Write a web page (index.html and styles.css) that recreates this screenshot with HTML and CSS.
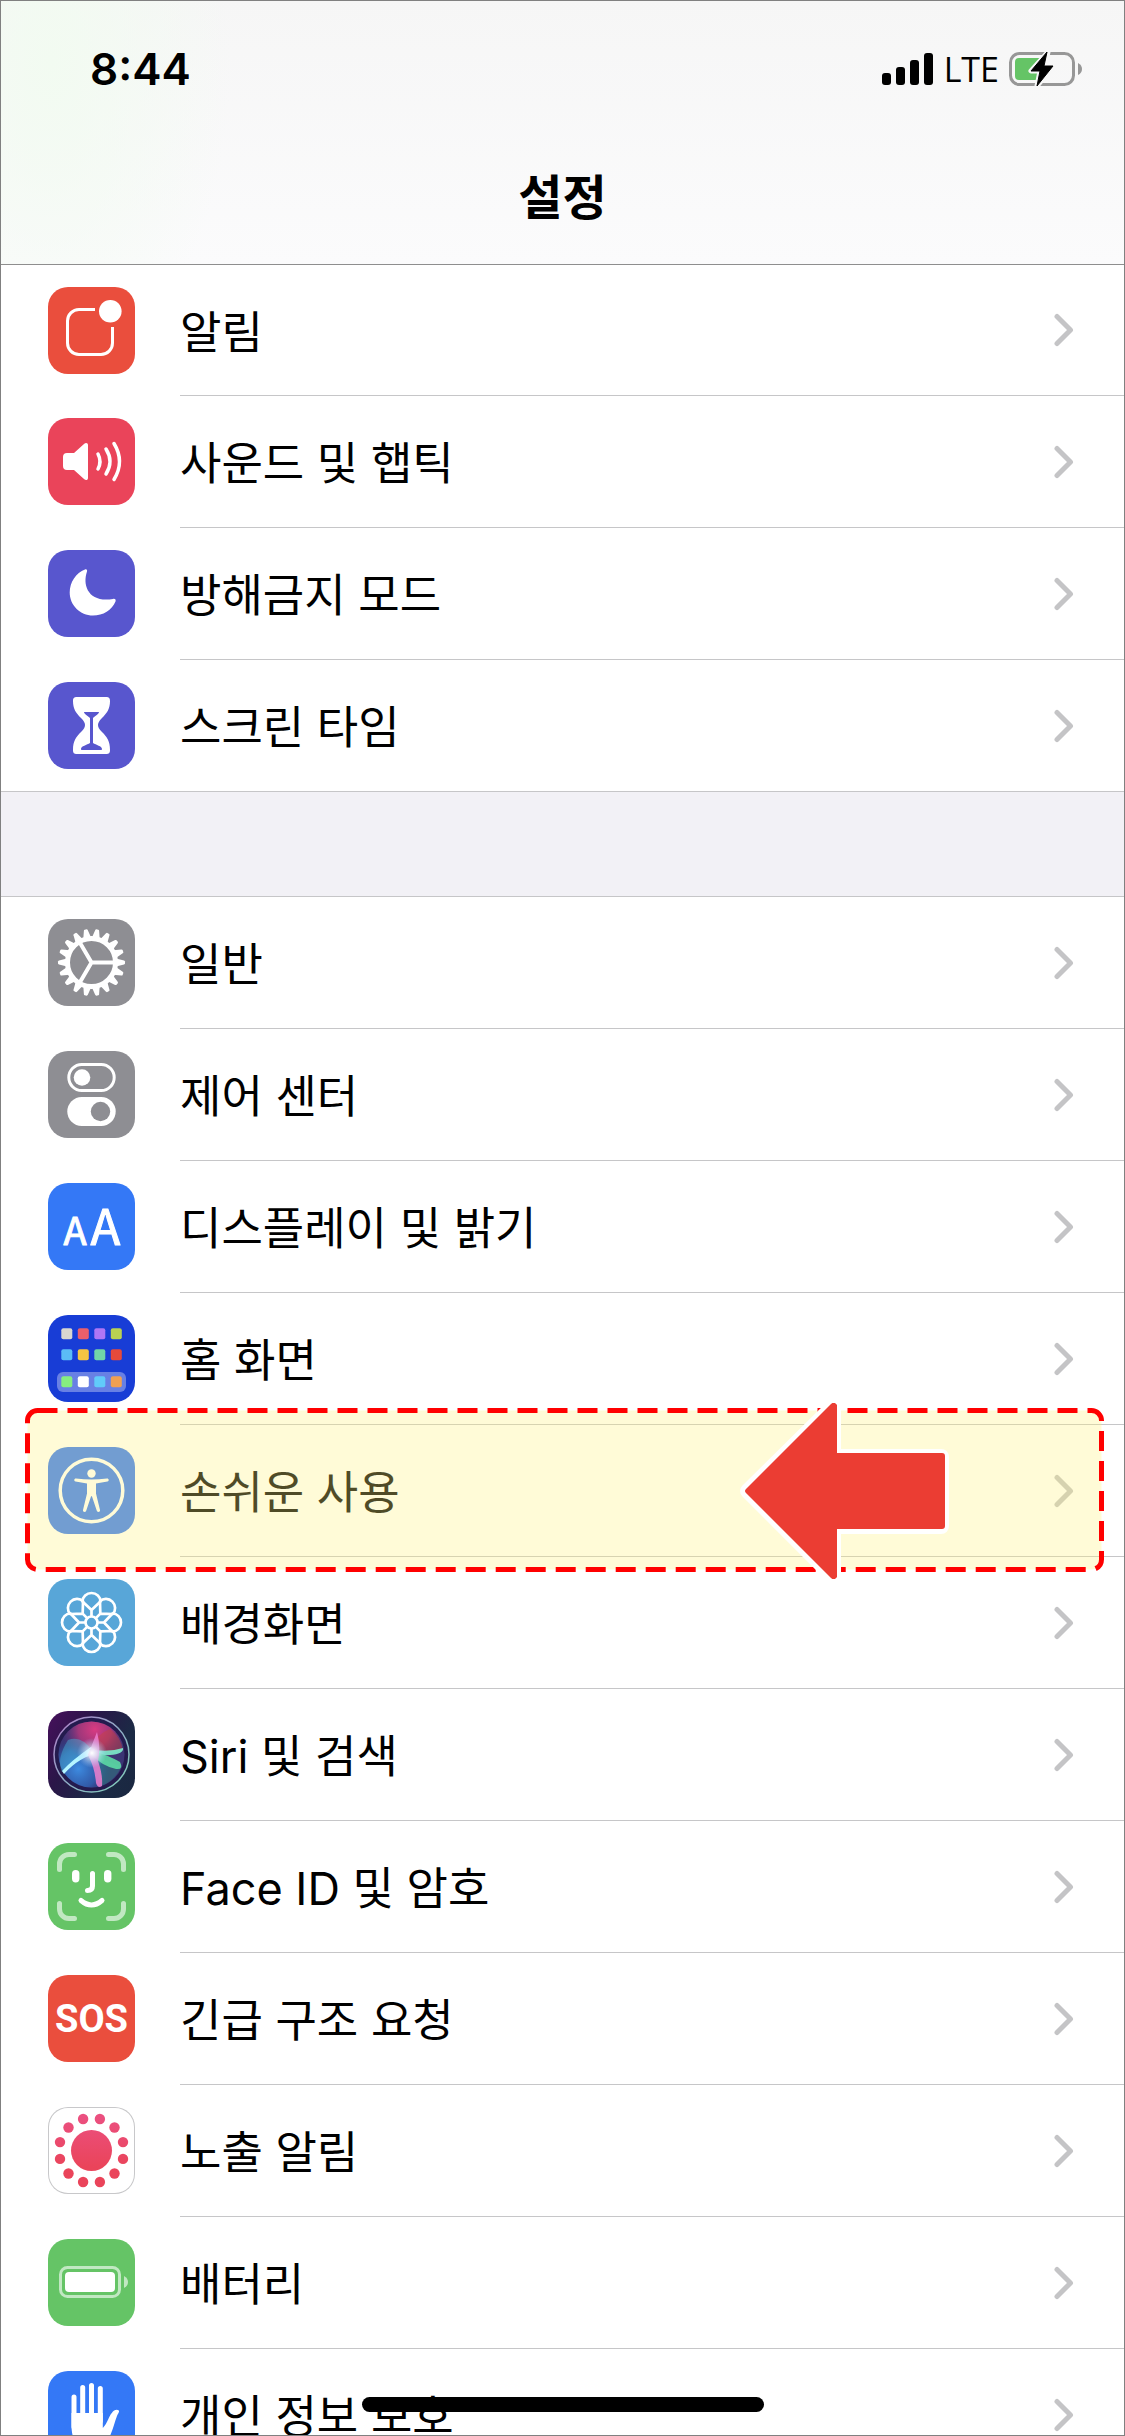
FILE: index.html
```html
<!DOCTYPE html>
<html lang="ko">

<head>
    <meta charset="UTF-8">
    <meta name="viewport" content="width=device-width, initial-scale=1.0">
    <title>설정</title>
    <link rel="stylesheet" href="styles.css">
</head>

<body>

    <svg class="defs" aria-hidden="true">
        <symbol id="chevron" viewBox="0 0 20 34">
            <path d="M3 3.500 16.500 17 3 30.500" fill="none" stroke="currentColor" stroke-width="5" stroke-linecap="round" stroke-linejoin="round" />
        </symbol>
    </svg>

    <div class="phone">
        <header class="header">
            <div class="status">
                <time class="time">8:44</time>
                <div class="status_right">
                    <svg class="signal" viewBox="0 0 51 32" aria-hidden="true">
                        <rect x="0" y="20" width="9" height="12" rx="3" />
                        <rect x="14" y="14" width="9" height="18" rx="3" />
                        <rect x="28" y="7" width="9" height="25" rx="3" />
                        <rect x="42" y="0" width="9" height="32" rx="3" />
                    </svg>
                    <span class="network">LTE</span>
                    <svg class="battery" viewBox="0 0 74 36" aria-hidden="true">
                        <rect x="1.500" y="2.500" width="63" height="31" rx="9" fill="none" stroke="#979797" stroke-width="3" />
                        <path d="M69 12q4 2 4 6t-4 6z" fill="#979797" />
                        <rect x="6" y="7" width="29" height="22" rx="4" fill="#65c466" />
                        <path d="M39 1 22 20h9l-3 15 17-20h-9l3-14z" fill="#000" stroke="#f7f7f7" stroke-width="5" stroke-linejoin="round" />
                        <path d="M38 1 22 20h9l-3 15 16-20h-9l3-14z" fill="#000" stroke="#000" stroke-width="1" stroke-linejoin="round" />
                    </svg>
                </div>
            </div>
            <h1 class="title">설정</h1>
        </header>

        <main class="list">
            <ul class="group">
                <li class="row">
                    <svg class="icon red" viewBox="0 0 87 87" aria-hidden="true">
                        <path d="M47 22.500H31a11.500 11.500 0 0 0-11.500 11.500v22A11.500 11.500 0 0 0 31 67.500h22A11.500 11.500 0 0 0 64.500 56V40" fill="none" stroke="#fff" stroke-width="3" />
                        <circle cx="62.300" cy="24.300" r="11.300" fill="#fff" />
                    </svg>
                    <a class="link" href="#">알림<svg class="chevron"><use href="#chevron" /></svg></a>
                </li>
                <li class="row">
                    <svg class="icon pink" viewBox="0 0 87 87" aria-hidden="true">
                        <path d="M19 35h7l10-9c2-2 4-1 4 1v33c0 2-2 3-4 1l-10-9h-7q-4 0-4-4V39q0-4 4-4z" fill="#fff" />
                        <path d="M50 36q4 7.500 0 15M58 31q8 12.500 0 25M66 25.500q11 18 0 36" fill="none" stroke="#fff" stroke-width="3.500" stroke-linecap="round" />
                    </svg>
                    <a class="link" href="#">사운드 및 햅틱<svg class="chevron"><use href="#chevron" /></svg></a>
                </li>
                <li class="row">
                    <svg class="icon indigo" viewBox="0 0 87 87" aria-hidden="true">
                        <path d="M37 19.500C38.500 19 39.500 20 39 21.500 34 36 41 53 65 49c2-.500 3.200.500 2.500 2.500C64 60 55 65.600 45 65.600 32 65.600 21.700 55 21.700 42.500 21.700 32 28 23 37 19.500z" fill="#fff" />
                    </svg>
                    <a class="link" href="#">방해금지 모드<svg class="chevron"><use href="#chevron" /></svg></a>
                </li>
                <li class="row">
                    <svg class="icon indigo" viewBox="0 0 87 87" aria-hidden="true">
                        <path d="M29 15h29c3 0 4 1 4 4 0 8-3 12-8 17-3 3-4 5-4 7s1 4 4 7c5 5 8 9 8 18 0 3-1 4-4 4H29c-3 0-4-1-4-4 0-9 3-13 8-18 3-3 4-5 4-7s-1-4-4-7c-5-5-8-9-8-17 0-3 1-4 4-4z" fill="#fff" />
                        <path d="M36 30h15c0 2-4 4-6 6v25c3 2 9 3 9 6 0 .700-.400 1-1 1H34c-.600 0-1-.300-1-1 0-3 6-4 9-6V36c-2-2-6-4-6-6z" fill="#5856ce" />
                    </svg>
                    <a class="link" href="#">스크린 타임<svg class="chevron"><use href="#chevron" /></svg></a>
                </li>
            </ul>

            <ul class="group">
                <li class="row">
                    <svg class="icon gray" viewBox="0 0 87 87" aria-hidden="true">
                        <defs>
                            <path id="tooth" d="M68 39.500 76 41.500q1 .300 1 1v2q0 .700-1 1L68 47.500z" fill="#fff" />
                            <g id="teeth3">
                                <use href="#tooth" />
                                <use href="#tooth" transform="rotate(20 43.500 43.500)" />
                                <use href="#tooth" transform="rotate(40 43.500 43.500)" />
                            </g>
                            <g id="teeth9">
                                <use href="#teeth3" />
                                <use href="#teeth3" transform="rotate(60 43.500 43.500)" />
                                <use href="#teeth3" transform="rotate(120 43.500 43.500)" />
                            </g>
                        </defs>
                        <use href="#teeth9" />
                        <use href="#teeth9" transform="rotate(180 43.500 43.500)" />
                        <circle cx="43.500" cy="43.500" r="24" fill="none" stroke="#fff" stroke-width="5" />
                        <path d="M67 43.500H43.500L31.500 23M43.500 43.500 31.500 64" fill="none" stroke="#fff" stroke-width="4" />
                    </svg>
                    <a class="link" href="#">일반<svg class="chevron"><use href="#chevron" /></svg></a>
                </li>
                <li class="row">
                    <svg class="icon gray" viewBox="0 0 87 87" aria-hidden="true">
                        <rect x="20.800" y="13.500" width="45.400" height="26" rx="13" fill="none" stroke="#fff" stroke-width="3" />
                        <circle cx="34" cy="26.500" r="8.300" fill="#fff" />
                        <rect x="19.300" y="46" width="48.400" height="29" rx="14.500" fill="#fff" />
                        <circle cx="52.500" cy="60.500" r="9.700" fill="#8e8e93" />
                    </svg>
                    <a class="link" href="#">제어 센터<svg class="chevron"><use href="#chevron" /></svg></a>
                </li>
                <li class="row">
                    <svg class="icon blue" viewBox="0 0 87 87" aria-hidden="true">
                        <text class="letter" x="27" y="62" font-size="38">A</text>
                        <text class="letter" x="57.500" y="62" font-size="49">A</text>
                    </svg>
                    <a class="link" href="#">디스플레이 및 밝기<svg class="chevron"><use href="#chevron" /></svg></a>
                </li>
                <li class="row">
                    <svg class="icon home" viewBox="0 0 87 87" aria-hidden="true">
                        <rect x="9" y="57" width="69" height="20" rx="6" fill="#fff" opacity=".35" />
                        <rect x="13.300" y="13.300" width="11" height="11" rx="2" fill="#d8d7d0" />
                        <rect x="29.800" y="13.300" width="11" height="11" rx="2" fill="#ec5f6b" />
                        <rect x="46.300" y="13.300" width="11" height="11" rx="2" fill="#af76f5" />
                        <rect x="62.800" y="13.300" width="11" height="11" rx="2" fill="#b9d152" />
                        <rect x="13.300" y="34.300" width="11" height="11" rx="2" fill="#5bbcf6" />
                        <rect x="29.800" y="34.300" width="11" height="11" rx="2" fill="#f6c543" />
                        <rect x="46.300" y="34.300" width="11" height="11" rx="2" fill="#71d5a8" />
                        <rect x="62.800" y="34.300" width="11" height="11" rx="2" fill="#e64a3b" />
                        <rect x="13.300" y="61.300" width="11" height="11" rx="2" fill="#86ee80" />
                        <rect x="29.800" y="61.300" width="11" height="11" rx="2" fill="#fff" />
                        <rect x="46.300" y="61.300" width="11" height="11" rx="2" fill="#61cbfa" />
                        <rect x="62.800" y="61.300" width="11" height="11" rx="2" fill="#f0a053" />
                    </svg>
                    <a class="link" href="#">홈 화면<svg class="chevron"><use href="#chevron" /></svg></a>
                </li>
                <li class="row">
                    <svg class="icon blue" viewBox="0 0 87 87" aria-hidden="true">
                        <circle cx="43.500" cy="43.500" r="31.300" fill="none" stroke="#fff" stroke-width="3.500" />
                        <circle cx="43.500" cy="26.500" r="4.200" fill="#fff" />
                        <path d="M28 31.500q15.500 2 31 0c2-.200 2.300 2.600.500 3L48 36.500v10l4 16.500c.500 2-2.500 2.800-3.200.800L44 49.500q-.500-1-1 0L38.200 63.800c-.700 2-3.700 1.200-3.200-.800l4-16.500v-10L27.500 34.500c-1.800-.400-1.500-3.200.500-3z" fill="#fff" />
                    </svg>
                    <a class="link" href="#">손쉬운 사용<svg class="chevron"><use href="#chevron" /></svg></a>
                    <svg class="outline" aria-hidden="true">
                        <rect class="outline_rect" x="2.500" y="2.500" rx="10" />
                    </svg>
                    <svg class="arrow" viewBox="0 0 212 176" aria-hidden="true">
                        <path d="M7 86 92 2q3-3 5 0v49h105q3 0 3 3v69q0 3-3 3H97v49q-2 3-5 0L7 90q-2-2 0-4z" fill="#eb3d33" stroke="#fff" stroke-width="10" stroke-linejoin="round" />
                        <path d="M7 86 92 1q3-3 6 1v48h105q3 0 3 3v70q0 3-3 3H98v48q-3 4-6 1L7 90q-2-2 0-4z" fill="#eb3d33" />
                    </svg>
                </li>
                <li class="row">
                    <svg class="icon sky" viewBox="0 0 87 87" aria-hidden="true">
                        <defs>
                            <path id="petal" d="M43.500 38V31L34.500 22.500A9 8.500 0 0 1 52.500 22.500L43.500 31" fill="none" stroke="#fff" stroke-width="2.700" stroke-linejoin="round" />
                            <g id="petals2">
                                <use href="#petal" />
                                <use href="#petal" transform="rotate(45 43.500 43.500)" />
                            </g>
                        </defs>
                        <use href="#petals2" />
                        <use href="#petals2" transform="rotate(90 43.500 43.500)" />
                        <use href="#petals2" transform="rotate(180 43.500 43.500)" />
                        <use href="#petals2" transform="rotate(270 43.500 43.500)" />
                        <circle cx="43.500" cy="43.500" r="6" fill="none" stroke="#fff" stroke-width="2.700" />
                    </svg>
                    <a class="link" href="#">배경화면<svg class="chevron"><use href="#chevron" /></svg></a>
                </li>
                <li class="row">
                    <svg class="icon siri" viewBox="0 0 87 87" aria-hidden="true">
                        <defs>
                            <radialGradient id="siri_pink" cx=".55" cy=".12" r=".5">
                                <stop offset="0" stop-color="#d93b82" />
                                <stop offset=".5" stop-color="#b8387c" stop-opacity=".8" />
                                <stop offset="1" stop-color="#7b2f80" stop-opacity="0" />
                            </radialGradient>
                            <radialGradient id="siri_blue" cx=".3" cy=".72" r=".5">
                                <stop offset="0" stop-color="#3d8be0" />
                                <stop offset=".6" stop-color="#2f63b4" stop-opacity=".8" />
                                <stop offset="1" stop-color="#223a80" stop-opacity="0" />
                            </radialGradient>
                            <radialGradient id="siri_glow">
                                <stop offset="0" stop-color="#fff" />
                                <stop offset=".35" stop-color="#e4f4ff" stop-opacity=".7" />
                                <stop offset="1" stop-color="#a0d0ff" stop-opacity="0" />
                            </radialGradient>
                            <linearGradient id="siri_ring" x1="0" y1="0" x2="1" y2="1">
                                <stop offset="0" stop-color="#b07cc8" />
                                <stop offset=".5" stop-color="#8fa9c4" />
                                <stop offset="1" stop-color="#7fd0b8" />
                            </linearGradient>
                        </defs>
                        <circle cx="43.500" cy="43.500" r="37" fill="#241b4e" />
                        <circle cx="43.500" cy="43.500" r="33" fill="#3b3474" />
                        <circle cx="43.500" cy="43.500" r="33" fill="url(#siri_blue)" />
                        <circle cx="43.500" cy="43.500" r="33" fill="url(#siri_pink)" />
                        <path d="M43 38q18 5 32 1-2-13-13-21-14 5-19 20z" fill="#c9433f" opacity=".45" />
                        <path d="M20 29q14-5 24 11L14 61Q8 48 20 29z" fill="#48b4d8" opacity=".45" />
                        <path d="M44 43 73 56q-6 14-20 19z" fill="#2c8a80" opacity=".45" />
                        <path d="M14 60q10-11 29-24l9 6q-20 3-36 21z" fill="#b5f5ff" />
                        <path d="M41 38q18 4 34-1 1 6-13 7l-17 1z" fill="#7ceccb" opacity=".9" />
                        <path d="M44 40q16 4 28 11 4 8-4 7-14-3-24-14z" fill="#5cd9a4" opacity=".9" />
                        <path d="M40 44l9-23q4 14 1 29 5 14 4 25-4 3-6-3-1-15-8-28z" fill="#f07fd0" opacity=".85" />
                        <circle cx="44" cy="42" r="15" fill="url(#siri_glow)" />
                        <circle cx="43.500" cy="43.500" r="37.500" fill="none" stroke="url(#siri_ring)" stroke-width="1.500" />
                    </svg>
                    <a class="link" href="#">Siri 및 검색<svg class="chevron"><use href="#chevron" /></svg></a>
                </li>
                <li class="row">
                    <svg class="icon green" viewBox="0 0 87 87" aria-hidden="true">
                        <path d="M26.500 11.500H21a9.500 9.500 0 0 0-9.500 9.500v5.500M60.500 11.500H66a9.500 9.500 0 0 1 9.500 9.500v5.500M26.500 75.500H21a9.500 9.500 0 0 1-9.500-9.500v-5.500M60.500 75.500H66a9.500 9.500 0 0 0 9.500-9.500v-5.500" fill="none" stroke="#c1e8c2" stroke-width="5" stroke-linecap="round" />
                        <rect x="24" y="27" width="7.400" height="12.400" rx="3.700" fill="#fff" />
                        <rect x="56" y="27" width="7.400" height="12.400" rx="3.700" fill="#fff" />
                        <path d="M44.500 30.500V43q0 4.500-5 4.500M33 57.500q10.500 9 21 0" fill="none" stroke="#fff" stroke-width="5" stroke-linecap="round" />
                    </svg>
                    <a class="link" href="#">Face ID 및 암호<svg class="chevron"><use href="#chevron" /></svg></a>
                </li>
                <li class="row">
                    <svg class="icon red" viewBox="0 0 87 87" aria-hidden="true">
                        <text class="sos" x="43.500" y="57">SOS</text>
                    </svg>
                    <a class="link" href="#">긴급 구조 요청<svg class="chevron"><use href="#chevron" /></svg></a>
                </li>
                <li class="row">
                    <svg class="icon exposure" viewBox="0 0 87 87" aria-hidden="true">
                        <defs>
                            <linearGradient id="exposure_fill" gradientUnits="userSpaceOnUse" x1="0" y1="10" x2="0" y2="60">
                                <stop offset="0" stop-color="#eb5080" />
                                <stop offset="1" stop-color="#ea445a" />
                            </linearGradient>
                        </defs>
                        <g fill="url(#exposure_fill)">
                            <circle cx="43.500" cy="43.500" r="20.500" />
                            <circle cx="35.100" cy="12" r="5.200" />
                            <circle cx="51.900" cy="12" r="5.200" />
                            <circle cx="66.500" cy="20.500" r="5.200" />
                            <circle cx="75" cy="35.100" r="5.200" />
                            <circle cx="75" cy="51.900" r="5.200" />
                            <circle cx="66.500" cy="66.500" r="5.200" />
                            <circle cx="51.900" cy="75" r="5.200" />
                            <circle cx="35.100" cy="75" r="5.200" />
                            <circle cx="20.500" cy="66.500" r="5.200" />
                            <circle cx="12" cy="51.900" r="5.200" />
                            <circle cx="12" cy="35.100" r="5.200" />
                            <circle cx="20.500" cy="20.500" r="5.200" />
                        </g>
                    </svg>
                    <a class="link" href="#">노출 알림<svg class="chevron"><use href="#chevron" /></svg></a>
                </li>
                <li class="row">
                    <svg class="icon green" viewBox="0 0 87 87" aria-hidden="true">
                        <rect x="12.500" y="28.500" width="59" height="29" rx="7" fill="none" stroke="#c1e8c2" stroke-width="3" />
                        <rect x="17" y="33" width="50" height="20" rx="4" fill="#fff" />
                        <path d="M76 37q4 2 4 6t-4 6z" fill="#c1e8c2" />
                    </svg>
                    <a class="link" href="#">배터리<svg class="chevron"><use href="#chevron" /></svg></a>
                </li>
                <li class="row">
                    <svg class="icon blue" viewBox="0 0 87 87" aria-hidden="true">
                        <path d="M26 26v30M34.700 16.500V50M43.500 14.500V50M52.300 17.500V50" stroke="#fff" stroke-width="5" stroke-linecap="round" />
                        <path d="M23.500 42h31.300v15c5-5 6-12 9-15 2-3 5-4 7-2.500 1 1-1 3-2 6-3 8-5 19-11 26-4 5-9 6.500-15 6.500-14 0-19.300-9-19.300-24z" fill="#fff" />
                    </svg>
                    <a class="link" href="#">개인 정보 보호<svg class="chevron"><use href="#chevron" /></svg></a>
                </li>
            </ul>
        </main>

        <div class="home_bar"></div>
    </div>

</body>

</html>
```
FILE: styles.css
```css
* {
    box-sizing: border-box;
}

body {
    margin: 0;
    font-family: Inter, "Noto Sans CJK KR", sans-serif;
    color: #000;
}

.defs {
    display: none;
}

.phone {
    position: relative;
    height: 100vh;
    overflow: hidden;
    border: 1px solid #808080;
    background: #fff;
}

.header {
    display: flex;
    flex-direction: column;
    padding: 44px 41px 0 89px;
    height: 264px;
    border-bottom: 1px solid #8e8e8e;
    background:
        radial-gradient(ellipse 180px 320px at 50px 60px, #f2fbf1, transparent),
        linear-gradient(#f6f6f6, #fbfbfc);
}

.status {
    display: flex;
    align-items: center;
    justify-content: space-between;
    height: 48px;
}

.time {
    font-size: 44px;
    font-weight: 600;
}

.status_right {
    display: flex;
    align-items: center;
}

.signal {
    width: 51px;
    height: 32px;
}

.network {
    margin: 0 10px 0 11px;
    font-family: "Open Sans", sans-serif;
    font-size: 34px;
    font-weight: 500;
    line-height: 48px;
}

.battery {
    width: 74px;
    height: 36px;
}

.title {
    margin: 69px 0 0 -48px;
    font-size: 48px;
    font-weight: 600;
    line-height: 72px;
    text-align: center;
}

.list {
    background: #f2f1f6;
}

.group {
    margin: 0;
    padding: 0;
    background: #fff;
    list-style: none;
}

.group + .group {
    margin-top: 104px;
    border-top: 1px solid #c6c6c8;
}

.row {
    position: relative;
    display: flex;
    align-items: center;
    height: 132px;
    padding-left: 47px;
}

/* the first row starts under the header's hairline */
.group:first-child .row:first-child {
    height: 131px;
}

/* full-width hairline at the end of a group */
.row:last-child {
    box-shadow: inset 0 -1px #c6c6c8;
}

.icon {
    flex: none;
    width: 87px;
    height: 87px;
    margin-bottom: 1px;
    border-radius: 20px;
}

.red {
    background: #ea4e3d;
}

.pink {
    background: #ea445a;
}

.indigo {
    background: #5856ce;
}

.gray {
    background: #8e8e93;
}

.blue {
    background: #3478f6;
}

.home {
    background: #183dd6;
}

.sky {
    background: #58a6d8;
}

.green {
    background: #65c466;
}

.siri {
    background: linear-gradient(120deg, #47105c, #2a1648 35%, #1b2a45 70%, #1a2740);
}

.exposure {
    background: #fff;
    box-shadow: inset 0 0 0 1px #c8c8ca;
}

.letter {
    fill: #fff;
    stroke: #fff;
    stroke-width: 1px;
    stroke-linejoin: round;
    font-family: "Noto Sans CJK KR", sans-serif;
    text-anchor: middle;
}

.sos {
    fill: #fff;
    font-family: Roboto, sans-serif;
    font-size: 38px;
    font-weight: 700;
    text-anchor: middle;
}

.link {
    display: flex;
    align-items: center;
    justify-content: space-between;
    flex: 1;
    height: 100%;
    margin-left: 45px;
    padding: 0 50px 2px 0;
    border-bottom: 1px solid #c6c6c8;
    color: inherit;
    font-size: 45px;
    text-decoration: none;
}

.chevron {
    width: 20px;
    height: 34px;
    margin-top: 2px;
    color: #c4c4c6;
}

/* dashed callout over the accessibility row */
.outline {
    position: absolute;
    top: -17px;
    right: 20px;
    left: 24px;
    width: calc(100% - 44px);
    height: 164px;
    z-index: 1;
    pointer-events: none;
}

.outline_rect {
    width: calc(100% - 5px);
    height: calc(100% - 5px);
    fill: rgba(255, 242, 125, .31);
    stroke: #f00;
    stroke-width: 5px;
    stroke-dasharray: 20 10;
}

.arrow {
    position: absolute;
    top: -22px;
    right: 173px;
    width: 212px;
    height: 176px;
    z-index: 2;
    pointer-events: none;
}

.home_bar {
    position: absolute;
    bottom: 23px;
    left: 50%;
    width: 402px;
    height: 15px;
    margin-left: -201px;
    border-radius: 8px;
    background: #000;
}
```
